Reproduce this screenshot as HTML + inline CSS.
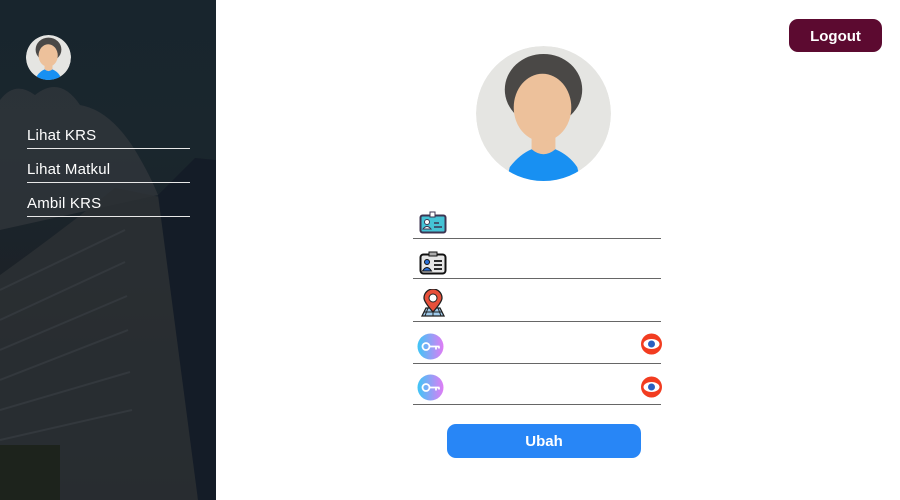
<!DOCTYPE html>
<html><head><meta charset="utf-8"><style>
*{margin:0;padding:0;box-sizing:border-box}
body{width:900px;height:500px;position:relative;overflow:hidden;background:#fff;font-family:"Liberation Sans",sans-serif}
#side{position:absolute;left:0;top:0;width:216px;height:500px;overflow:hidden;background:linear-gradient(180deg,#18252d 0%,#1a262d 30%,#1c2127 60%,#151a1f 100%)}
.nav{position:absolute;left:27px;width:163px;color:#fff;font-size:15px;border-bottom:1.5px solid #e8e8e8;padding-bottom:4px;letter-spacing:.2px}
.btn{position:absolute;color:#fff;font-weight:bold;font-size:15px;text-align:center;border-radius:9px}
.line{position:absolute;left:413px;width:248px;height:1px;background:#666}
.ic{position:absolute;left:419px}
</style></head><body>
<div id="side">
<svg width="216" height="500" style="position:absolute;left:0;top:0">
<path d="M0 100 Q15 80 35 95 Q60 75 80 105 Q110 110 135 150 Q150 175 158 195 L0 230Z" fill="#3d4043" opacity=".5"/>
<path d="M0 275 Q60 232 115 188 L175 200 L198 500 L0 500Z" fill="#2c3034" opacity=".85"/>
<path d="M158 195 L195 158 L216 160 L216 500 L198 500Z" fill="#141c27"/>
<g stroke="#3b4045" stroke-width="2" opacity=".6">
<path d="M0 290 L125 230"/><path d="M0 320 L125 262"/><path d="M0 350 L127 296"/><path d="M0 380 L128 330"/><path d="M0 410 L130 372"/><path d="M0 440 L132 410"/>
</g>
<rect x="0" y="445" width="60" height="55" fill="#1d231c"/>
</svg>
<svg style="position:absolute;left:26px;top:35px" width="45" height="45" viewBox="6 6 136 136"><defs><clipPath id="c1"><circle cx="74" cy="74" r="68"/></clipPath></defs><g clip-path="url(#c1)"><circle cx="74" cy="74" r="68" fill="#e5e5e2"/><ellipse cx="74" cy="50" rx="39" ry="36" fill="#4a4846"/><rect x="62" y="88" width="24" height="30" fill="#edc19b"/><ellipse cx="73" cy="68" rx="29" ry="34" fill="#edc19b"/><path d="M36 145 L40 128 Q50 115 62 110 Q74 120 86 110 Q100 116 108 128 L112 145Z" fill="#1890f2"/></g></svg>
<div class="nav" style="top:127px">Lihat KRS</div>
<div class="nav" style="top:161px">Lihat Matkul</div>
<div class="nav" style="top:195px">Ambil KRS</div>
</div>
<div class="btn" style="left:789px;top:19px;width:93px;height:33px;line-height:35px;background:#5c0a30">Logout</div>
<svg style="position:absolute;left:476px;top:46px" width="135" height="135" viewBox="6 6 136 136"><defs><clipPath id="c2"><circle cx="74" cy="74" r="68"/></clipPath></defs><g clip-path="url(#c2)"><circle cx="74" cy="74" r="68" fill="#e5e5e2"/><ellipse cx="74" cy="50" rx="39" ry="36" fill="#4a4846"/><rect x="62" y="88" width="24" height="30" fill="#edc19b"/><ellipse cx="73" cy="68" rx="29" ry="34" fill="#edc19b"/><path d="M36 145 L40 128 Q50 115 62 110 Q74 120 86 110 Q100 116 108 128 L112 145Z" fill="#1890f2"/></g></svg>
<svg class="ic" style="top:211px" width="28" height="24"><rect x="1.5" y="4.5" width="25" height="17" rx="2" fill="#45c3d6" stroke="#3d3552" stroke-width="2"/><rect x="11" y="1" width="5" height="5" fill="#fff" stroke="#3d3552"/><circle cx="8" cy="11" r="2.5" fill="#fff" stroke="#3d3552"/><path d="M4 18 Q8 13 12 18Z" fill="#fff" stroke="#3d3552"/><path d="M15 12h5M15 16h8" stroke="#3d3552" stroke-width="1.5"/></svg>
<div class="line" style="top:238px"></div>
<svg class="ic" style="top:251px" width="28" height="24"><rect x="1.5" y="3.5" width="25" height="19" rx="3" fill="#e6e6e6" stroke="#111" stroke-width="2"/><rect x="10" y="1" width="8" height="4" fill="#aaa" stroke="#111"/><circle cx="8" cy="11" r="2.5" fill="#2a6fd6" stroke="#111"/><path d="M3.5 20 Q8 13 12.5 20Z" fill="#2a6fd6" stroke="#111"/><path d="M15 10h8M15 14h8M15 18h8" stroke="#111" stroke-width="1.8"/></svg>
<div class="line" style="top:278px"></div>
<svg class="ic" style="top:289px" width="28" height="28"><path d="M3 27 L7 19 L21 19 L25 27Z" fill="#9ec9ea" stroke="#222" stroke-width="1.3"/><path d="M9 19 L6 27 M14 19 V27 M19 19 L22 27 M5 23 H23" stroke="#222"/><path d="M14 23 C6 14 5 11 5 9 A9 9 0 0 1 23 9 C23 11 22 14 14 23Z" fill="#e8503a" stroke="#222" stroke-width="1.3"/><circle cx="14" cy="9" r="4" fill="#fff" stroke="#222"/></svg>
<div class="line" style="top:321px"></div>
<svg class="ic" style="top:333px;left:417px" width="28" height="28"><defs><linearGradient id="g" x1="0" x2="1"><stop offset="0" stop-color="#3ec6f6"/><stop offset="1" stop-color="#e07cf5"/></linearGradient></defs><circle cx="13.5" cy="13.5" r="13" fill="url(#g)"/><circle cx="9" cy="13.5" r="3.5" fill="none" stroke="#fff" stroke-width="1.8"/><path d="M12.5 13.5h10M19 13.5v3M22 13.5v2" stroke="#fff" stroke-width="1.8"/></svg>
<svg style="position:absolute;left:640px;top:333px" width="23" height="22"><circle cx="11.5" cy="11" r="10.5" fill="#f23c20"/><ellipse cx="11.5" cy="11" rx="8" ry="5" fill="#fff"/><circle cx="11.5" cy="11" r="3.5" fill="#2a5fc0"/></svg>
<div class="line" style="top:363px"></div>
<svg class="ic" style="top:374px;left:417px" width="28" height="28"><circle cx="13.5" cy="13.5" r="13" fill="url(#g)"/><circle cx="9" cy="13.5" r="3.5" fill="none" stroke="#fff" stroke-width="1.8"/><path d="M12.5 13.5h10M19 13.5v3M22 13.5v2" stroke="#fff" stroke-width="1.8"/></svg>
<svg style="position:absolute;left:640px;top:376px" width="23" height="22"><circle cx="11.5" cy="11" r="10.5" fill="#f23c20"/><ellipse cx="11.5" cy="11" rx="8" ry="5" fill="#fff"/><circle cx="11.5" cy="11" r="3.5" fill="#2a5fc0"/></svg>
<div class="line" style="top:404px"></div>
<div class="btn" style="left:447px;top:424px;width:194px;height:34px;line-height:35px;background:#2886f6">Ubah</div>
</body></html>
